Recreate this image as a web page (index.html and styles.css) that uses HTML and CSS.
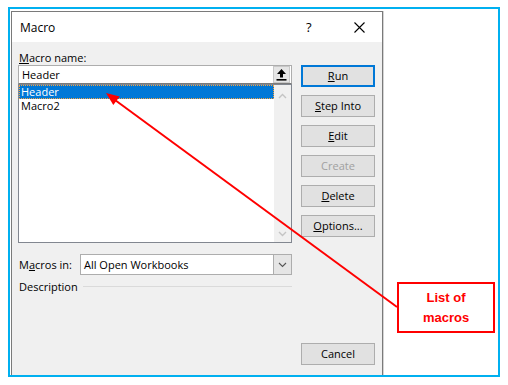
FILE: index.html
```html
<!DOCTYPE html>
<html lang="en">
<head>
    <meta charset="UTF-8">
    <title>Macro</title>
    <link rel="stylesheet" href="styles.css">
</head>
<body>
    <div class="frame">
        <div class="dialog">
            <div class="titlebar">
                <span class="title">Macro</span>
                <span class="help">?</span>
                <span class="close">
                    <svg width="11" height="11" viewBox="0 0 11 11"><path d="M0.5 0.5 L10.5 10.5 M10.5 0.5 L0.5 10.5" stroke="#000" stroke-width="1.1" fill="none"/></svg>
                </span>
            </div>
            <div class="content">
                <div class="left">
                    <div class="label"><u>M</u>acro name:</div>
                    <div class="namebox">
                        <span class="nametext">Header</span>
                        <span class="upbtn">
                            <svg width="15" height="15" viewBox="0 0 15 15"><path d="M7.5 2 L3 7 L6 7 L6 10.5 L9 10.5 L9 7 L12 7 Z" fill="#000"/><rect x="2.5" y="12" width="10" height="1.6" fill="#000"/></svg>
                        </span>
                    </div>
                    <div class="list">
                        <div class="items">
                            <div class="item selected">Header</div>
                            <div class="item">Macro2</div>
                        </div>
                        <div class="scrollbar">
                            <svg width="9" height="6" viewBox="0 0 9 6"><path d="M1 5 L4.5 1.5 L8 5" stroke="#c4c4c4" stroke-width="1.4" fill="none"/></svg>
                            <svg width="9" height="6" viewBox="0 0 9 6"><path d="M1 1 L4.5 4.5 L8 1" stroke="#c4c4c4" stroke-width="1.4" fill="none"/></svg>
                        </div>
                    </div>
                    <div class="macros-in">
                        <span class="in-label">M<u>a</u>cros in:</span>
                        <div class="combo">
                            <span class="combo-text">All Open Workbooks</span>
                            <span class="combo-btn">
                                <svg width="9" height="6" viewBox="0 0 9 6"><path d="M1 1 L4.5 4.5 L8 1" stroke="#555" stroke-width="1.1" fill="none"/></svg>
                            </span>
                        </div>
                    </div>
                    <div class="description">
                        <span>Description</span>
                        <span class="rule"></span>
                    </div>
                </div>
                <div class="right">
                    <div class="btn default"><u>R</u>un</div>
                    <div class="btn"><u>S</u>tep Into</div>
                    <div class="btn"><u>E</u>dit</div>
                    <div class="btn disabled">Create</div>
                    <div class="btn"><u>D</u>elete</div>
                    <div class="btn"><u>O</u>ptions...</div>
                    <div class="btn cancel">Cancel</div>
                </div>
            </div>
        </div>
    </div>

    <svg class="arrow" width="508" height="385" viewBox="0 0 508 385">
        <line x1="397" y1="307" x2="115" y2="100" stroke="#ff0000" stroke-width="2"/>
        <polygon points="106,93 113.3,104.9 119.7,96.5" fill="#ff0000"/>
    </svg>
    <div class="callout">List of<br>macros</div>
</body>
</html>
```

FILE: styles.css
```css
body {
    margin: 7px 0 0 8px;
    background-color: #fff;
    font-family: "Open Sans", "Noto Sans", sans-serif;
    font-size: 11px;
    color: #000;
}
.frame {
    width: 487px;
    height: 364px;
    border: 2px solid #00b0f0;
    padding: 2px 0 0 1px;
    box-sizing: content-box;
    overflow: hidden;
    background-color: #fff;
}
.dialog {
    width: 370px;
    height: 380px;
    border: 1px solid #7a7a7a;
    background-color: #f0f0f0;
    box-shadow: 1px 0 0 #d4d4d4;
}
.titlebar {
    height: 30px;
    background-color: #fff;
    display: flex;
    align-items: center;
}
.title {
    font-size: 12px;
    padding-left: 8px;
    flex: 1;
}
.help {
    font-size: 13px;
    width: 14px;
    margin-right: 34px;
}
.close {
    width: 11px;
    height: 11px;
    margin-right: 17px;
    display: flex;
}
.content {
    display: flex;
    padding: 8px 7px 0 6px;
    gap: 9px;
}
.left {
    width: 274px;
}
.label {
    height: 15px;
    line-height: 15px;
    padding-left: 1px;
}
.namebox {
    height: 19px;
    box-sizing: border-box;
    border: 1px solid #adadad;
    border-bottom-color: #7a7a7a;
    background-color: #fff;
    display: flex;
    align-items: center;
}
.nametext {
    flex: 1;
    padding-left: 3px;
}
.upbtn {
    width: 17px;
    height: 17px;
    box-sizing: border-box;
    border: 1px solid #c8c8c8;
    background-color: #e5e5e5;
    display: flex;
    align-items: center;
    justify-content: center;
    margin-right: 1px;
}
.list {
    height: 159px;
    box-sizing: border-box;
    border: 1px solid #828790;
    background-color: #fff;
    display: flex;
}
.items {
    flex: 1;
}
.item {
    height: 14px;
    line-height: 13px;
    padding-left: 2px;
}
.item.selected {
    background-color: #0078d7;
    color: #fff;
    border: 1px dotted #f5a340;
    box-sizing: border-box;
    padding-left: 1px;
    line-height: 11px;
}
.scrollbar {
    width: 17px;
    background-color: #f0f0f0;
    display: flex;
    flex-direction: column;
    justify-content: space-between;
    align-items: center;
    padding: 8px 0 5px;
    box-sizing: border-box;
}
.macros-in {
    display: flex;
    align-items: center;
    margin-top: 11px;
}
.in-label {
    width: 62px;
    padding-left: 1px;
    box-sizing: border-box;
}
.combo {
    width: 212px;
    height: 21px;
    box-sizing: border-box;
    border: 1px solid #adadad;
    background-color: #fff;
    display: flex;
}
.combo-text {
    flex: 1;
    line-height: 19px;
    padding-left: 3px;
}
.combo-btn {
    width: 17px;
    border-left: 1px solid #adadad;
    background-color: #e5e5e5;
    display: flex;
    align-items: center;
    justify-content: center;
}
.description {
    display: flex;
    align-items: center;
    height: 15px;
    margin-top: 4px;
    padding-left: 1px;
}
.description .rule {
    flex: 1;
    height: 1px;
    background-color: #dadada;
    margin-left: 5px;
}
.right {
    width: 74px;
    padding-top: 15px;
    display: flex;
    flex-direction: column;
    gap: 8px;
}
.btn {
    height: 22px;
    box-sizing: border-box;
    border: 1px solid #adadad;
    background-color: #e1e1e1;
    text-align: center;
    line-height: 19px;
}
.btn.default {
    border: 2px solid #0078d7;
    line-height: 17px;
}
.btn.disabled {
    color: #a0a0a0;
}
.btn.cancel {
    margin-top: 98px;
}
.arrow {
    position: absolute;
    left: 0;
    top: 0;
}
.callout {
    position: absolute;
    left: 397px;
    top: 282px;
    width: 94px;
    height: 47px;
    border: 2px solid #ff0000;
    background-color: #fff;
    color: #ff0000;
    font-family: "Liberation Sans", Arial, sans-serif;
    font-weight: bold;
    font-size: 13px;
    line-height: 20px;
    text-align: center;
    padding-top: 4px;
    box-sizing: content-box;
    height: 43px;
}
```
